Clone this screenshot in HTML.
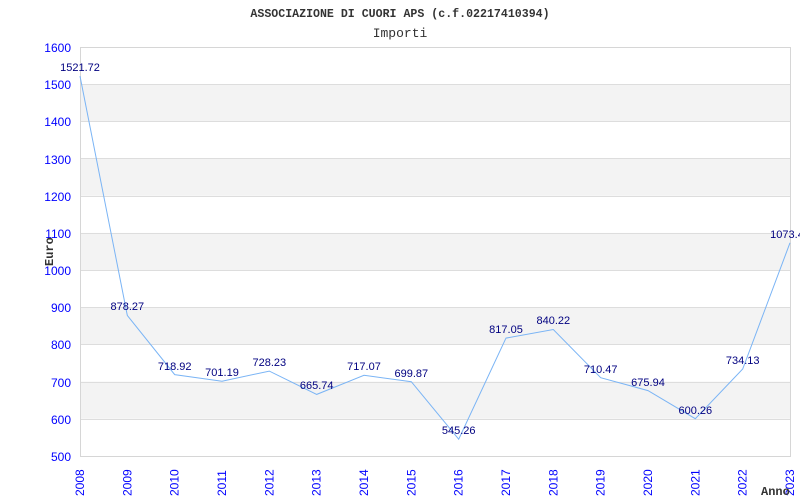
<!DOCTYPE html>
<html><head><style>
html,body{margin:0;padding:0;background:#fff;width:800px;height:500px;overflow:hidden}
</style></head><body>
<svg width="800" height="500" xmlns="http://www.w3.org/2000/svg">
<rect width="800" height="500" fill="#fff"/>
<text x="400" y="17" text-anchor="middle" font-family="Liberation Mono, monospace" font-weight="bold" font-size="11.6" fill="#333">ASSOCIAZIONE DI CUORI APS (c.f.02217410394)</text>
<text x="400" y="37" text-anchor="middle" font-family="Liberation Mono, monospace" font-size="13" fill="#333">Importi</text>
<g fill="#f3f3f3">
<rect x="80" y="84.2" width="710" height="37.2"/>
<rect x="80" y="158.6" width="710" height="37.2"/>
<rect x="80" y="232.9" width="710" height="37.2"/>
<rect x="80" y="307.3" width="710" height="37.2"/>
<rect x="80" y="381.6" width="710" height="37.2"/>
</g>
<g stroke="#dddddd" stroke-width="1">
<line x1="80" y1="84.5" x2="790" y2="84.5"/><line x1="80" y1="121.5" x2="790" y2="121.5"/>
<line x1="80" y1="158.5" x2="790" y2="158.5"/><line x1="80" y1="196.5" x2="790" y2="196.5"/>
<line x1="80" y1="233.5" x2="790" y2="233.5"/><line x1="80" y1="270.5" x2="790" y2="270.5"/>
<line x1="80" y1="307.5" x2="790" y2="307.5"/><line x1="80" y1="344.5" x2="790" y2="344.5"/>
<line x1="80" y1="382.5" x2="790" y2="382.5"/><line x1="80" y1="419.5" x2="790" y2="419.5"/>
</g>
<rect x="80.5" y="47.5" width="710" height="409" fill="none" stroke="#d6d6d6"/>
<g font-family="Liberation Sans, sans-serif" font-size="12" fill="#0000ff" text-anchor="end">
<text x="71" y="52">1600</text><text x="71" y="89">1500</text><text x="71" y="126">1400</text>
<text x="71" y="164">1300</text><text x="71" y="201">1200</text><text x="71" y="238">1100</text>
<text x="71" y="275">1000</text><text x="71" y="312">900</text><text x="71" y="349">800</text>
<text x="71" y="387">700</text><text x="71" y="424">600</text><text x="71" y="461">500</text>
</g>
<g font-family="Liberation Sans, sans-serif" font-size="12" fill="#0000ff">
<text transform="translate(84,496) rotate(-90)">2008</text>
<text transform="translate(131.3,496) rotate(-90)">2009</text>
<text transform="translate(178.7,496) rotate(-90)">2010</text>
<text transform="translate(226,496) rotate(-90)">2011</text>
<text transform="translate(273.3,496) rotate(-90)">2012</text>
<text transform="translate(320.7,496) rotate(-90)">2013</text>
<text transform="translate(368,496) rotate(-90)">2014</text>
<text transform="translate(415.3,496) rotate(-90)">2015</text>
<text transform="translate(462.7,496) rotate(-90)">2016</text>
<text transform="translate(510,496) rotate(-90)">2017</text>
<text transform="translate(557.3,496) rotate(-90)">2018</text>
<text transform="translate(604.7,496) rotate(-90)">2019</text>
<text transform="translate(652,496) rotate(-90)">2020</text>
<text transform="translate(699.3,496) rotate(-90)">2021</text>
<text transform="translate(746.7,496) rotate(-90)">2022</text>
<text transform="translate(794,496) rotate(-90)">2023</text>
</g>
<text transform="translate(53,266) rotate(-90)" font-family="Liberation Mono, monospace" font-weight="bold" font-size="12" fill="#333">Euro</text>
<text x="761" y="495" font-family="Liberation Mono, monospace" font-weight="bold" font-size="12" fill="#333">Anno</text>
<polyline fill="none" stroke="#7ab4f5" stroke-width="1" points="80,76.1 127.3,315.4 174.7,374.6 222,381.2 269.3,371.1 316.7,394.4 364,375.3 411.3,381.7 458.7,439.2 506,338.1 553.3,329.5 600.7,377.7 648,390.6 695.3,418.7 742.7,369 790,242.8"/>
<g font-family="Liberation Sans, sans-serif" font-size="11" fill="#000080" text-anchor="middle">
<text x="80" y="71">1521.72</text>
<text x="127.3" y="310">878.27</text>
<text x="174.7" y="370">718.92</text>
<text x="222" y="376">701.19</text>
<text x="269.3" y="366">728.23</text>
<text x="316.7" y="389">665.74</text>
<text x="364" y="370">717.07</text>
<text x="411.3" y="377">699.87</text>
<text x="458.7" y="434">545.26</text>
<text x="506" y="333">817.05</text>
<text x="553.3" y="324">840.22</text>
<text x="600.7" y="373">710.47</text>
<text x="648" y="386">675.94</text>
<text x="695.3" y="414">600.26</text>
<text x="742.7" y="364">734.13</text>
<text x="787" y="238">1073.4</text>
</g>
</svg>
</body></html>
